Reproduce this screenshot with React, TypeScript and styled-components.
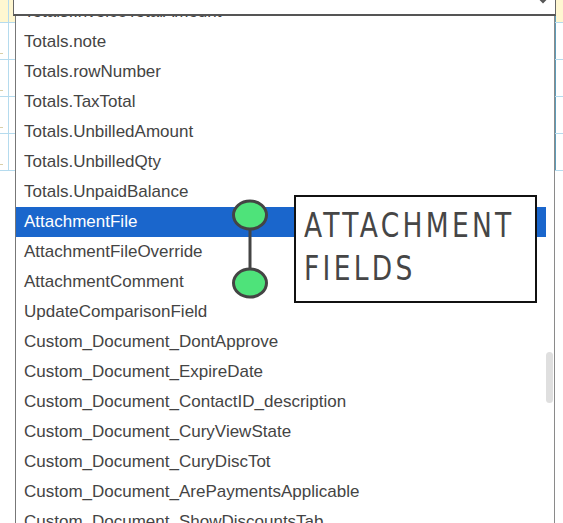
import React, {useLayoutEffect, useRef} from 'react'
import styled, {createGlobalStyle} from 'styled-components'

const GlobalStyle = createGlobalStyle`
	html, body {
		margin: 0;
		padding: 0;
		background: #fff;
	}
	* {
		box-sizing: border-box;
	}
`

type RowProps = {
	header?: boolean
}

type ItemProps = {
	selected?: boolean
}

const fields = [
	'Totals.InvoiceTotalAmount',
	'Totals.note',
	'Totals.rowNumber',
	'Totals.TaxTotal',
	'Totals.UnbilledAmount',
	'Totals.UnbilledQty',
	'Totals.UnpaidBalance',
	'AttachmentFile',
	'AttachmentFileOverride',
	'AttachmentComment',
	'UpdateComparisonField',
	'Custom_Document_DontApprove',
	'Custom_Document_ExpireDate',
	'Custom_Document_ContactID_description',
	'Custom_Document_CuryViewState',
	'Custom_Document_CuryDiscTot',
	'Custom_Document_ArePaymentsApplicable',
	'Custom_Document_ShowDiscountsTab',
	'Custom_Document_CuryDocBal',
	'Custom_Document_Status',
]

const Page = styled.div`
	position: relative;
	width: 563px;
	height: 523px;
	overflow: hidden;
	font-family: "Liberation Sans", Arial, sans-serif;
`

const GridBackground = styled.div`
	display: flex;
	flex-direction: column;
`

const GridRow = styled.div<RowProps>`
	display: grid;
	grid-template-columns: 9px 1fr 8px;
	height: ${props => props.header ? '23px' : '37px'};
	background-color: ${props => props.header ? '#fff7d1' : '#fff'};
	border-bottom: 1px solid #b5dbee;
`

const GridCell = styled.div`
	border-right: 1px solid #b5dbee;

	&:last-child {
		border-right: none;
		border-left: 1px solid #5d9cb8;
	}
`

const Tick = styled.span`
	display: block;
	width: 3px;
	height: 1px;
	margin-top: 30px;
	background: #d9cfa8;
`

const Select = styled.div`
	position: absolute;
	left: 13px;
	top: -10px;
	width: 543px;
	height: 26px;
	background: #fff;
	border: 1px solid #666;
	border-bottom: 2px solid #555;
	display: flex;
	justify-content: flex-end;
	padding-right: 6px;
`

const Dropdown = styled.div`
	position: absolute;
	left: 15px;
	top: 16px;
	width: 540px;
	bottom: 0;
	display: flex;
	background: #fff;
	border-left: 1px solid #777;
	border-right: 1px solid #8a8a8a;
`

const Viewport = styled.div`
	flex: 1;
	overflow: hidden;
`

const Item = styled.div<ItemProps>`
	height: 30px;
	display: flex;
	align-items: center;
	padding-left: 8px;
	font-size: 17px;
	color: ${props => props.selected ? '#fff' : '#444'};
	background-color: ${props => props.selected ? '#1a66cc' : 'transparent'};
	white-space: nowrap;
`

const ScrollTrack = styled.div`
	width: 8px;
	padding-top: 336px;
`

const ScrollThumb = styled.div`
	width: 7px;
	height: 51px;
	border-radius: 4px;
	background: #dfdfdf;
`

const Note = styled.div`
	position: absolute;
	left: 294px;
	top: 195px;
	width: 243px;
	height: 108px;
	border: 2px solid #111;
	background: #fff;
	padding: 7px 0 0 8px;
	overflow: hidden;
`

const NoteText = styled.div`
	display: inline-block;
	transform: scaleX(0.78);
	transform-origin: left top;
	font-family: "DejaVu Sans", sans-serif;
	font-size: 34px;
	line-height: 43px;
	letter-spacing: 4.2px;
	color: #464646;
	white-space: nowrap;
`

const Connector = styled.svg`
	position: absolute;
	left: 228px;
	top: 196px;
`

const ChevronDown = () => (
	<svg width="12" height="12" viewBox="0 0 12 12" style={{marginTop: 4}}>
		<path d="M2 3 L6 7 L10 3" fill="none" stroke="#555" strokeWidth="2"/>
	</svg>
)

const App = () => {
	const viewportRef = useRef<HTMLDivElement>(null)

	useLayoutEffect(() => {
		if (viewportRef.current) {
			viewportRef.current.scrollTop = 19
		}
	}, [])

	return (
		<Page>
			<GlobalStyle/>
			<GridBackground>
				<GridRow header>
					<GridCell/>
					<GridCell/>
					<GridCell/>
				</GridRow>
				{[0, 1, 2, 3].map(i => (
					<GridRow key={i}>
						<GridCell><Tick/></GridCell>
						<GridCell/>
						<GridCell/>
					</GridRow>
				))}
			</GridBackground>

			<Select>
				<ChevronDown/>
			</Select>

			<Dropdown>
				<Viewport ref={viewportRef}>
					{fields.map(name => (
						<Item key={name} selected={name === 'AttachmentFile'}>{name}</Item>
					))}
				</Viewport>
				<ScrollTrack>
					<ScrollThumb/>
				</ScrollTrack>
			</Dropdown>

			<Connector width="44" height="106" viewBox="0 0 44 106">
				<line x1="22" y1="30" x2="22" y2="76" stroke="#444" strokeWidth="3"/>
				<ellipse cx="22" cy="19" rx="16.5" ry="14" fill="#4ee37a" stroke="#444" strokeWidth="3"/>
				<ellipse cx="22" cy="87" rx="16.5" ry="14" fill="#4ee37a" stroke="#444" strokeWidth="3"/>
			</Connector>

			<Note>
				<NoteText>
					ATTACHMENT<br/>FIELDS
				</NoteText>
			</Note>
		</Page>
	)
}

export default App
